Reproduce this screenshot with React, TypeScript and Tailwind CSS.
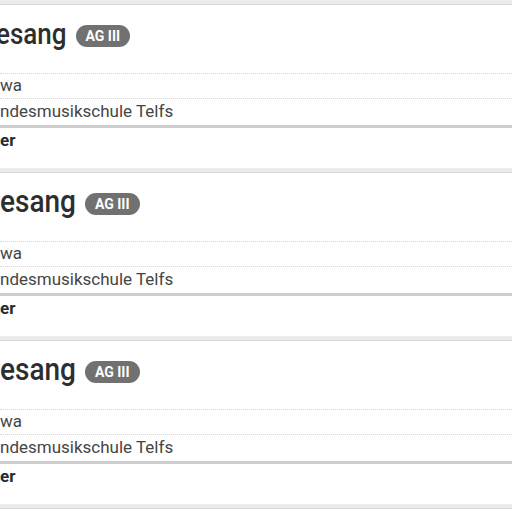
import React from "react";

const cards = [
  { ml: "-ml-[4px]", size: "text-[26px]" },
  { ml: "ml-0", size: "text-[28px]" },
  { ml: "ml-0", size: "text-[28px]" },
  { ml: "ml-0", size: "text-[28px]" },
];

function Card({ ml, size }: { ml: string; size: string }) {
  return (
    <div className="flex flex-col">
      <div className="h-[5px] border-b border-[#d9d9d9] bg-[#ebebeb]" />
      <div className="flex h-[163px] flex-col bg-white">
        <div className="flex h-[68px] items-start pt-[13px]">
          <div className={`flex items-center gap-[9px] ${ml}`}>
            <span className={`${size} inline-block origin-[50%_70%] scale-y-[1.15] font-medium leading-[34px] text-[#2e2e2e]`}>
              esang
            </span>
            <span className="mt-[2px] flex h-[22px] items-center rounded-full bg-[#717171] px-[10px] text-[14px] font-bold leading-none text-white">
              AG III
            </span>
          </div>
        </div>
        <div className="flex h-[25px] items-center border-t border-dotted border-[#d6d6d6] text-[17px] text-[#454545]">
          wa
        </div>
        <div className="flex h-[27px] items-center border-t border-dotted border-[#d6d6d6] text-[17px] text-[#454545]">
          ndesmusikschule Telfs
        </div>
        <div className="h-[40px] border-t-[3px] border-[#cdcdcd] pt-[2px] text-[17px] font-bold leading-[20px] text-[#2a2a2a]">
          er
        </div>
      </div>
    </div>
  );
}

export default function App() {
  return (
    <div className="h-[512px] w-[512px] overflow-hidden bg-white font-['Roboto',sans-serif]">
      {cards.map((c, i) => (
        <Card key={i} ml={c.ml} size={c.size} />
      ))}
    </div>
  );
}
